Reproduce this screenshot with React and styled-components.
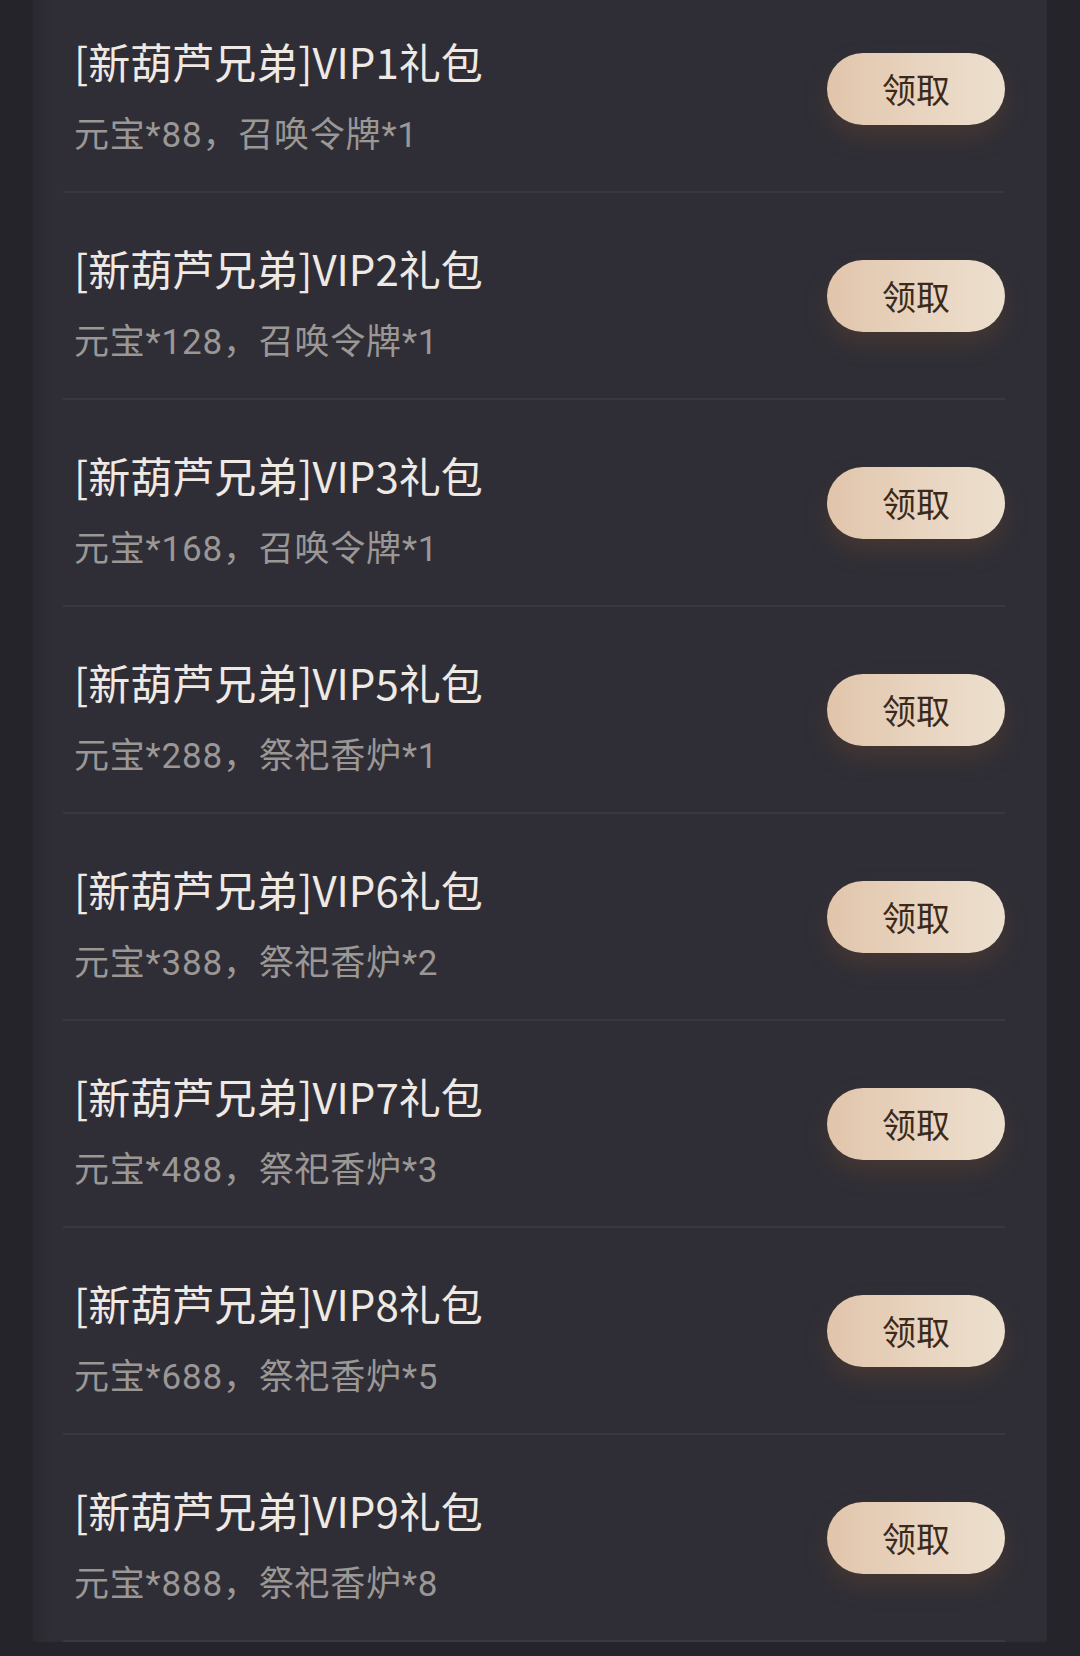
import styled, { createGlobalStyle } from "styled-components";

const GlobalStyle = createGlobalStyle`
  html, body {
    margin: 0;
    padding: 0;
    background: #25242b;
    overflow: hidden;
  }
  body {
    font-family: "Noto Sans CJK SC", "Noto Sans", sans-serif;
  }
`;

const gifts = [
  { level: 1, reward: "元宝*88，召唤令牌*1" },
  { level: 2, reward: "元宝*128，召唤令牌*1" },
  { level: 3, reward: "元宝*168，召唤令牌*1" },
  { level: 5, reward: "元宝*288，祭祀香炉*1" },
  { level: 6, reward: "元宝*388，祭祀香炉*2" },
  { level: 7, reward: "元宝*488，祭祀香炉*3" },
  { level: 8, reward: "元宝*688，祭祀香炉*5" },
  { level: 9, reward: "元宝*888，祭祀香炉*8" },
];

const App = () => {
  return (
    <>
      <GlobalStyle />
      <Page>
        <Panel>
          <List>
            {gifts.map((g) => (
              <Row key={g.level}>
                <Info>
                  <Title>[新葫芦兄弟]VIP{g.level}礼包</Title>
                  <Reward>{g.reward}</Reward>
                </Info>
                <ClaimButton>领取</ClaimButton>
              </Row>
            ))}
          </List>
        </Panel>
      </Page>
    </>
  );
};

export default App;

const Page = styled.div`
  width: 1080px;
  height: 1656px;
  background: #25242b;
  padding-left: 33px;
  box-sizing: border-box;
  overflow: hidden;
`;

const Panel = styled.div`
  width: 1014px;
  height: 100%;
  background: #2f2e36;
  box-shadow: inset 14px 0 10px -8px rgba(38, 37, 44, 0.6);
  padding: 0 42px 0 30px;
  box-sizing: border-box;
`;

const List = styled.div`
  display: flex;
  flex-direction: column;
  margin-top: -14px;
`;

const Row = styled.div`
  display: flex;
  align-items: flex-start;
  justify-content: space-between;
  box-sizing: border-box;
  height: 207px;
  padding: 50px 0 0 11px;
  border-bottom: 2px solid #393842;
`;

const Info = styled.div`
  display: flex;
  flex-direction: column;
`;

const Title = styled.div`
  font-size: 42px;
  line-height: 50px;
  color: #efe9e4;
  white-space: nowrap;
`;

const Reward = styled.div`
  margin-top: 30px;
  font-family: Roboto, "Noto Sans CJK SC", sans-serif;
  font-size: 35px;
  line-height: 40px;
  letter-spacing: 0.8px;
  color: #9b9795;
  white-space: nowrap;
`;

const ClaimButton = styled.button`
  margin-top: 17px;
  width: 178px;
  height: 72px;
  border: none;
  border-radius: 36px;
  background: linear-gradient(90deg, #e1c5ab 0%, #e9d6c2 60%, #ecdfcd 100%);
  box-shadow: 0 12px 22px rgba(110, 72, 45, 0.35);
  color: #3b2a1b;
  font-family: "Noto Sans CJK SC", sans-serif;
  font-size: 34px;
  line-height: 72px;
  padding: 0;
  cursor: pointer;
`;
